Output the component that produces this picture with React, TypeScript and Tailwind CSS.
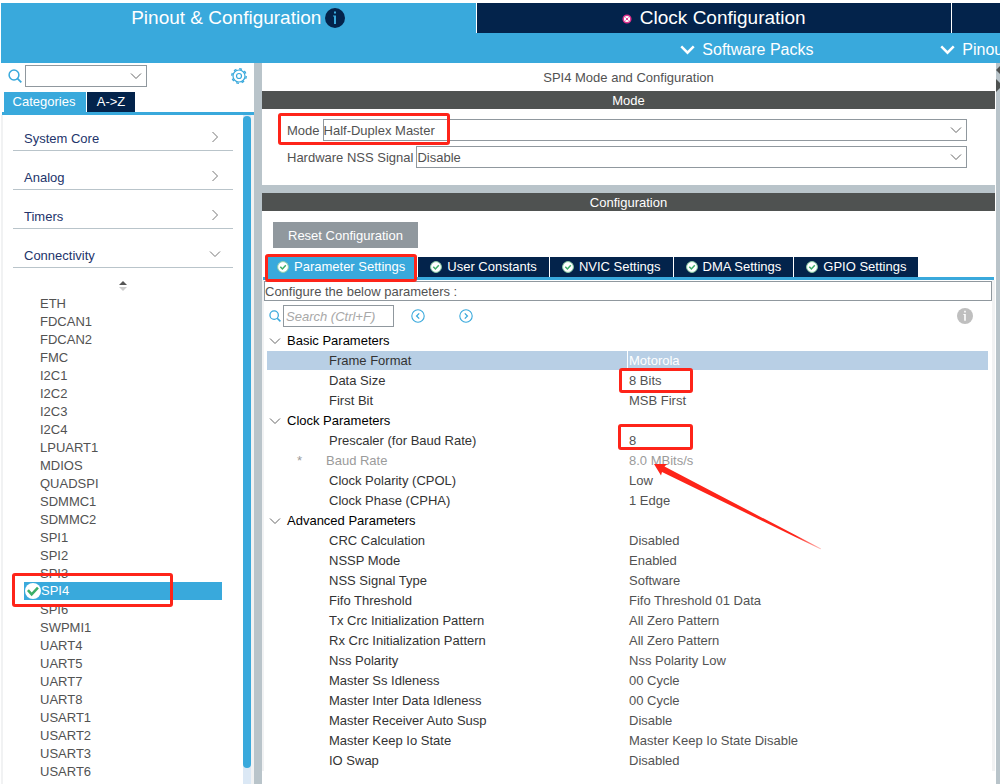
import type { ReactNode } from "react";

const categories = ["System Core", "Analog", "Timers", "Connectivity"];

const peripherals = [
  "ETH", "FDCAN1", "FDCAN2", "FMC", "I2C1", "I2C2", "I2C3", "I2C4", "LPUART1",
  "MDIOS", "QUADSPI", "SDMMC1", "SDMMC2", "SPI1", "SPI2", "SPI3", "SPI4", "SPI6",
  "SWPMI1", "UART4", "UART5", "UART7", "UART8", "USART1", "USART2", "USART3", "USART6",
];

const tabs = ["Parameter Settings", "User Constants", "NVIC Settings", "DMA Settings", "GPIO Settings"];

type Param = { name: string; value: string; selected?: boolean; readOnly?: boolean };

const groups: { title: string; params: Param[] }[] = [
  {
    title: "Basic Parameters",
    params: [
      { name: "Frame Format", value: "Motorola", selected: true },
      { name: "Data Size", value: "8 Bits" },
      { name: "First Bit", value: "MSB First" },
    ],
  },
  {
    title: "Clock Parameters",
    params: [
      { name: "Prescaler (for Baud Rate)", value: "8" },
      { name: "Baud Rate", value: "8.0 MBits/s", readOnly: true },
      { name: "Clock Polarity (CPOL)", value: "Low" },
      { name: "Clock Phase (CPHA)", value: "1 Edge" },
    ],
  },
  {
    title: "Advanced Parameters",
    params: [
      { name: "CRC Calculation", value: "Disabled" },
      { name: "NSSP Mode", value: "Enabled" },
      { name: "NSS Signal Type", value: "Software" },
      { name: "Fifo Threshold", value: "Fifo Threshold 01 Data" },
      { name: "Tx Crc Initialization Pattern", value: "All Zero Pattern" },
      { name: "Rx Crc Initialization Pattern", value: "All Zero Pattern" },
      { name: "Nss Polarity", value: "Nss Polarity Low" },
      { name: "Master Ss Idleness", value: "00 Cycle" },
      { name: "Master Inter Data Idleness", value: "00 Cycle" },
      { name: "Master Receiver Auto Susp", value: "Disable" },
      { name: "Master Keep Io State", value: "Master Keep Io State Disable" },
      { name: "IO Swap", value: "Disabled" },
    ],
  },
];

function Chevron({ className = "", dir = "down", width = 1 }: { className?: string; dir?: "down" | "right"; width?: number }) {
  return (
    <svg viewBox="0 0 12 12" className={className} fill="none" stroke="currentColor" strokeWidth={width} aria-hidden="true">
      <path d={dir === "down" ? "M1 3.5 6 8.5l5-5" : "M3.5 1l5 5-5 5"} />
    </svg>
  );
}

function SearchIcon({ className }: { className: string }) {
  return (
    <svg viewBox="0 0 14 14" className={className} fill="none" stroke="#39a9dc" aria-hidden="true">
      <circle cx="6" cy="6" r="4.9" strokeWidth="1.5" />
      <path d="M9.6 9.6 13.3 13.3" strokeWidth="1.8" />
    </svg>
  );
}

function InfoIcon({ className, mark }: { className: string; mark: string }) {
  return (
    <svg viewBox="0 0 20 20" className={className} aria-hidden="true">
      <circle cx="10" cy="10" r="10" fill="currentColor" />
      <path d="M9 3.5h2v2H9zM8 7.500H11V16H9V8.600H8z" fill={mark} />
    </svg>
  );
}

function GearIcon() {
  return (
    <svg viewBox="0 0 16 16" className="size-4" fill="none" stroke="#39a9dc" aria-hidden="true">
      <circle cx="8" cy="8" r="7.200" strokeWidth="1.4" strokeDasharray="2.8 2.855" />
      <circle cx="8" cy="8" r="6" strokeWidth="1.2" />
      <circle cx="8" cy="8" r="2.500" strokeWidth="1.2" />
    </svg>
  );
}

function CheckIcon({ className, ring = true }: { className: string; ring?: boolean }) {
  return (
    <svg viewBox="0 0 12 12" className={className} fill="none" aria-hidden="true">
      <circle cx="6" cy="6" r={ring ? 5.4 : 6} fill="#fff" stroke={ring ? "#8fd0a8" : "none"} strokeWidth="1" />
      <path d={ring ? "M3.3 5.8 5.4 8l3.4-3.7" : "M2.2 5.4 5 8.500l4.700-5"} stroke="#3cae68" strokeWidth={ring ? 1.5 : 1.9} />
    </svg>
  );
}

function StepIcon({ dir }: { dir: "prev" | "next" }) {
  return (
    <svg viewBox="0 0 14 14" className="size-[14px]" fill="none" stroke="#39a9dc" aria-hidden="true">
      <circle cx="7" cy="7" r="6.2" strokeWidth="1.1" />
      <path d={dir === "prev" ? "M8.2 4.4 5.6 7l2.6 2.6" : "M5.8 4.4 8.4 7 5.8 9.6"} strokeWidth="1.3" />
    </svg>
  );
}

// Red hand-placed highlight drawn over the control it surrounds
function Highlight({ className }: { className: string }) {
  return <span className={`pointer-events-none absolute z-10 rounded-[3px] border-[3px] border-[#fe2419] ${className}`} />;
}

function Arrow() {
  return (
    <svg viewBox="0 0 168 86" className="pointer-events-none absolute top-[33px] left-[26px] z-10 h-[86px] w-[168px]" aria-hidden="true">
      <defs>
        <linearGradient id="tail" x1="0" x2="1" y1="0" y2="0">
          <stop offset="0.85" stopColor="#fe2419" />
          <stop offset="1" stopColor="#fe2419" stopOpacity="0.3" />
        </linearGradient>
      </defs>
      <path d="M0 0H13L10.500 2.500 167 84.500 166.500 85.200 8 8 7 11.500z" fill="url(#tail)" />
    </svg>
  );
}

function Header() {
  return (
    <header className="mt-[3px] ml-px overflow-hidden">
      <nav className="flex h-[30px] gap-px text-[19px] text-white">
        <button className="flex w-[47.5%] shrink-0 items-center justify-center gap-1 bg-[#39a9dc]">
          Pinout &amp; Configuration
          <InfoIcon className="size-5 text-[#03234b]" mark="#39a9dc" />
        </button>
        <button className="flex w-[47.5%] shrink-0 items-center justify-center gap-2 bg-[#03234b] pt-px">
          <svg viewBox="0 0 10 10" className="size-[10px]" aria-hidden="true">
            <circle cx="5" cy="5" r="3.800" fill="#fff" stroke="#e0308c" strokeWidth="1.5" />
            <path d="M3.500 3.500 6.500 6.500M6.500 3.500 3.500 6.500" stroke="#e0308c" strokeWidth="0.9" />
          </svg>
          Clock Configuration
        </button>
        <button className="w-[47.5%] shrink-0 bg-[#03234b]" aria-label="Project Manager" />
      </nav>
      <div className="flex h-[30px] bg-[#39a9dc] pl-[68%] text-[16px] text-white">
        <button className="flex w-[260px] shrink-0 items-center gap-[7px] pt-[3px]">
          <Chevron className="size-[15px]" width={2} />
          Software Packs
        </button>
        <button className="flex shrink-0 items-center gap-[7px] pt-[3px]">
          <Chevron className="size-[15px]" width={2} />
          Pinout
        </button>
      </div>
    </header>
  );
}

function Sidebar() {
  return (
    <aside className="flex w-[253px] shrink-0 flex-col">
      <div className="flex items-center pt-[2px] pr-[7px] pl-[7px]">
        <SearchIcon className="size-[14px]" />
        <div className="relative ml-[3px]">
          <select aria-label="Find peripheral" className="block h-[22px] w-[122px] appearance-none border border-[#90989e] bg-white" />
          <Chevron className="pointer-events-none absolute top-[5px] right-[5px] size-3 text-[#666]" />
        </div>
        <button className="ml-auto" aria-label="Settings">
          <GearIcon />
        </button>
      </div>
      <div className="mt-[5px] ml-px flex h-5 gap-px pl-[2px] text-white">
        <button className="w-[82px] bg-[#39a9dc] pr-[2px]">Categories</button>
        <button className="w-12 bg-[#03234b]">A-&gt;Z</button>
      </div>
      <div className="ml-px h-[3px] bg-[#39a9dc]" />
      <div className="flex flex-1 border-r-[3px] border-l-2 border-[#f1f2f3]">
        <div className="flex-1">
          <div className="flex flex-col gap-2 pt-[5px] pr-[10px] pl-[10px]">
            {categories.map((name) => (
              <button key={name} className="flex h-[31px] items-end justify-between border-b border-[#b9c4ca] pr-3 pb-px pl-[11px] leading-5 text-[#23346b]">
                {name}
                <Chevron dir={name === "Connectivity" ? "down" : "right"} className="mb-[6px] size-3 text-[#777]" />
              </button>
            ))}
          </div>
          <svg viewBox="0 0 10 12" className="mt-3 ml-[115px] h-3 w-[10px]" aria-hidden="true">
            <path d="M5 1 9 5H1z" fill="#555" />
            <path d="M5 11 9 7H1z" fill="#ccc" />
          </svg>
          <ul className="mt-[2px] pr-[21px] pl-[21px]">
            {peripherals.map((name) =>
              name === "SPI4" ? (
                <li key={name} className="relative flex h-[18px] items-center bg-[#39a9dc] pl-px leading-5 text-white">
                  <CheckIcon ring={false} className="size-4" />
                  {name}
                  <Highlight className="top-[-9px] left-[-12px] h-[34px] w-[161px]" />
                </li>
              ) : (
                <li key={name} className="h-[18px] pl-4 leading-5 text-[#525252]">{name}</li>
              ),
            )}
          </ul>
        </div>
        <div className="w-2 bg-[#dbe8f5] pt-px pb-4">
          <div className="h-full rounded-full bg-[#39a9dc]" />
        </div>
      </div>
    </aside>
  );
}

function SectionBar({ children }: { children: ReactNode }) {
  return <h2 className="h-[18px] bg-[#4f5251] text-center leading-5 text-white">{children}</h2>;
}

function ModeField({ id, label, value, marked }: { id: string; label: string; value: string; marked?: boolean }) {
  return (
    <div className="relative flex items-center gap-[3px]">
      <label htmlFor={id} className="pt-px">{label}</label>
      <select id={id} className="h-[22px] flex-1 appearance-none border border-[#90989e] bg-white pt-px">
        <option>{value}</option>
      </select>
      <Chevron className="pointer-events-none absolute right-[5px] size-3 text-[#666]" />
      {marked && <Highlight className="top-[-6px] left-[-9px] h-[32px] w-[172px]" />}
    </div>
  );
}

function ParameterTable() {
  return (
    <table className="mr-1 ml-[3px] table-fixed border-separate border-spacing-0 text-left">
      <colgroup>
        <col className="w-[361px]" />
        <col />
      </colgroup>
      {groups.map((group) => (
        <tbody key={group.title}>
          <tr className="h-5">
            <th colSpan={2} className="p-0 font-normal text-black">
              <button className="flex items-center gap-[6px] pl-[2px] leading-5">
                <Chevron className="size-3 text-[#666]" />
                {group.title}
              </button>
            </th>
          </tr>
          {group.params.map((param) => (
            <tr key={param.name} className={`h-5 leading-[19px] ${param.readOnly ? "text-[#9b9b9b]" : "text-[#525252]"}`}>
              <td className={`border-r border-b border-white p-0 ${param.selected ? "bg-[#b8cfe5]" : ""} ${param.readOnly ? "" : "pl-[62px] text-[#333]"}`}>
                {param.readOnly && <span className="inline-block w-[59px] pl-[30px]">*</span>}
                {param.name}
              </td>
              <td className={`relative border-b border-white p-0 pl-px ${param.selected ? "bg-[#b8cfe5] text-white" : ""}`}>
                {param.value}
                {param.name === "Data Size" && <Highlight className="top-[-3px] left-[-9px] h-[25px] w-[74px]" />}
                {param.name.startsWith("Prescaler") && (
                  <>
                    <Highlight className="top-[-7px] left-[-10px] h-[26px] w-[75px]" />
                    <Arrow />
                  </>
                )}
              </td>
            </tr>
          ))}
        </tbody>
      ))}
    </table>
  );
}

function Configuration() {
  return (
    <section className="flex-1 bg-white">
      <SectionBar>Configuration</SectionBar>
      <button className="mt-[11px] ml-[11px] block h-[26px] bg-[#90989e] px-[15px] pt-px text-white">Reset Configuration</button>
      <div role="tablist" className="mt-[9px] ml-[3px] flex gap-px text-white">
        {tabs.map((tab, i) => (
          <button
            key={tab}
            role="tab"
            aria-selected={i === 0}
            className={`relative flex h-5 items-center gap-[5px] px-3 ${i === 0 ? "bg-[#39a9dc]" : "bg-[#03234b]"}`}
          >
            <CheckIcon className="size-3" />
            {tab}
            {i === 0 && <Highlight className="top-[-3px] left-0 h-[28px] w-full" />}
          </button>
        ))}
      </div>
      <div className="mr-px ml-px h-[3px] bg-[#39a9dc]" />
      <div className="flex flex-col border-r-[3px] border-l-2 border-[#f1f2f3] pt-px">
        <p className="h-5 border border-[#90989e] leading-[19px]">Configure the below parameters :</p>
        <div className="mb-1 flex items-center pt-1 pr-[19px] pl-[5px]">
          <SearchIcon className="size-3" />
          <input
            aria-label="Search parameters"
            placeholder="Search (Ctrl+F)"
            className="ml-[2px] h-[22px] w-[111px] border border-[#90989e] px-[2px] placeholder:text-[#a8a8a8] placeholder:italic"
          />
          <button className="ml-[17px]" aria-label="Previous match"><StepIcon dir="prev" /></button>
          <button className="ml-[34px]" aria-label="Next match"><StepIcon dir="next" /></button>
          <button className="ml-auto" aria-label="Information">
            <InfoIcon className="size-4 text-[#bfbfbf]" mark="#fff" />
          </button>
        </div>
        <ParameterTable />
      </div>
    </section>
  );
}

export default function App() {
  return (
    <div className="flex min-h-screen flex-col overflow-hidden bg-white font-['Liberation_Sans',Arial,sans-serif] text-[13px] text-[#525252]">
      <Header />
      <main className="ml-px flex flex-1">
        <Sidebar />
        <div className="w-2 shrink-0 bg-[#b9c4ca]" />
        <div className="flex min-w-0 flex-1 flex-col gap-2 bg-[#b9c4ca]">
          <section className="bg-white">
            <h1 className="pt-px text-center leading-[27px]">SPI4 Mode and Configuration</h1>
            <SectionBar>Mode</SectionBar>
            <div className="flex flex-col gap-[5px] pt-[10px] pr-7 pb-[17px] pl-[25px]">
              <ModeField id="mode" label="Mode" value="Half-Duplex Master" marked />
              <ModeField id="nss" label="Hardware NSS Signal" value="Disable" />
            </div>
          </section>
          <Configuration />
        </div>
        <div className="w-[5px] shrink-0 border-l border-white bg-[#b9c4ca]">
          <svg viewBox="0 0 4 30" className="h-[30px] w-1" fill="#4f5251" aria-hidden="true">
            <path d="M0 7 4 3v8zM0 16l4 4v5l-4 4z" />
          </svg>
        </div>
      </main>
    </div>
  );
}
